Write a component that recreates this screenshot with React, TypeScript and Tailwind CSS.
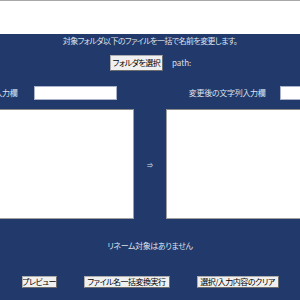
export default function App() {
  const font = { fontFamily: '"Noto Sans CJK JP", "Noto Sans", sans-serif', fontFeatureSettings: '"palt"' }
  const btn =
    'flex items-center justify-center overflow-hidden whitespace-nowrap border border-[#adadad] border-r-[#6d6d6d] border-b-[#6d6d6d] bg-[#f0f0f0] leading-none tracking-[-0.5px] text-black'

  return (
    <div className="flex h-[300px] w-[300px] flex-col overflow-hidden bg-white" style={font}>
      <div className="h-[1px] bg-[#a8a8a8]" />
      <div className="h-[33px] bg-white" />
      <div className="flex flex-1 flex-col bg-[#22396b] text-[8px] text-[#dde2ec]">
        <div className="flex h-[14px] items-center justify-center whitespace-nowrap tracking-[-0.6px]">
          対象フォルダ以下のファイルを一括で名前を変更します。
        </div>

        <div className="mt-[7px] flex h-[16px] items-center justify-center">
          <div className="flex w-[80px] shrink-0 items-center gap-[9px]">
            <button type="button" className={`${btn} h-[16px] w-[53px] shrink-0 text-[8px]`}>
              フォルダを選択
            </button>
            <span className="text-[8px]">path:</span>
          </div>
        </div>

        <div className="mt-[15px] flex h-[14px] justify-center">
          <div className="flex w-[425px] shrink-0 items-center whitespace-nowrap tracking-[-0.3px]">
            <span className="w-[80px] text-right">変更前の文字列入力欄</span>
            <div className="ml-[16px] h-[14px] w-[83px] border border-[#aab3c9] bg-white" />
            <span className="ml-[69px] w-[80px] text-right">変更後の文字列入力欄</span>
            <div className="ml-[14px] h-[14px] w-[83px] border border-[#aab3c9] bg-white" />
          </div>
        </div>

        <div className="mt-[9px] flex h-[110px] justify-center">
          <div className="flex w-[432px] shrink-0 items-center">
            <div className="h-full w-[200px] border border-[#a0a0a0] border-t-[#8a8a8a] bg-white" />
            <span className="w-[32px] text-center text-[6px]">⇒</span>
            <div className="h-full w-[200px] border border-[#a0a0a0] border-t-[#8a8a8a] bg-white" />
          </div>
        </div>

        <div className="mt-[20px] flex h-[14px] items-center justify-center whitespace-nowrap tracking-[-0.4px]">
          リネーム対象はありません
        </div>

        <div className="mt-[23px] flex h-[12px] justify-center">
          <div className="flex w-[257px] shrink-0 items-center">
            <button type="button" className={`${btn} h-[12px] w-[35px] shrink-0 text-[8px]`}>
              プレビュー
            </button>
            <button type="button" className={`${btn} ml-[27px] h-[12px] w-[86px] shrink-0 text-[8px]`}>
              ファイル名一括変換実行
            </button>
            <button type="button" className={`${btn} ml-[27px] h-[12px] w-[82px] shrink-0 text-[8px]`}>
              選択/入力内容のクリア
            </button>
          </div>
        </div>
      </div>
    </div>
  )
}
